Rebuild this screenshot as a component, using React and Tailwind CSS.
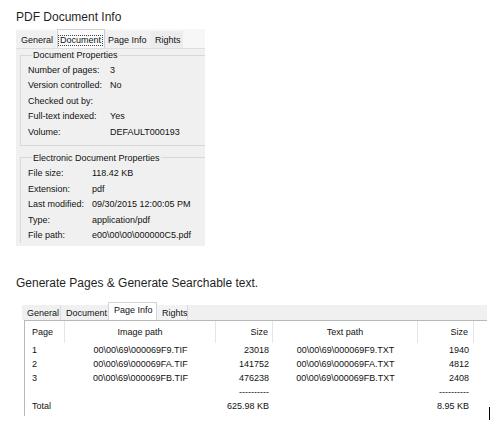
import React from "react";

const docProps = [
  ["Number of pages:", "3"],
  ["Version controlled:", "No"],
  ["Checked out by:", ""],
  ["Full-text indexed:", "Yes"],
  ["Volume:", "DEFAULT000193"],
];

const fileProps = [
  ["File size:", "118.42 KB"],
  ["Extension:", "pdf"],
  ["Last modified:", "09/30/2015 12:00:05 PM"],
  ["Type:", "application/pdf"],
  ["File path:", "e00\\00\\00\\000000C5.pdf"],
];

const pages = [
  ["1", "00\\00\\69\\000069F9.TIF", "23018", "00\\00\\69\\000069F9.TXT", "1940"],
  ["2", "00\\00\\69\\000069FA.TIF", "141752", "00\\00\\69\\000069FA.TXT", "4812"],
  ["3", "00\\00\\69\\000069FB.TIF", "476238", "00\\00\\69\\000069FB.TXT", "2408"],
];

const PropRows = ({ rows, labelW }) => (
  <div>
    {rows.map(([k, v]) => (
      <div key={k} className="flex h-[15.5px] items-center">
        <span className={labelW}>{k}</span>
        <span>{v}</span>
      </div>
    ))}
  </div>
);

export default function App() {
  return (
    <div className="relative h-[422px] w-[498px] overflow-hidden bg-white font-['Liberation_Sans',Arial,sans-serif] text-[#1f1f1f]">
      <div className="pl-4 pt-[10px]">
        <h1 className="text-[12px] leading-[14px]">PDF Document Info</h1>

        {/* top dialog */}
        <div className="mt-[5px] w-[189px] text-[9px] leading-[12px] text-[#111]">
          <div className="flex h-[19px] items-end bg-[#f7f7f7]">
            <div className="h-[17px] w-[40px] bg-[#f0f0f0] pl-[5px] pt-[3px]">General</div>
            <div className="ml-px h-[19px] w-[48px] border border-b-0 border-[#cfcfcf] bg-[#fbfbfb] pt-[4px]">
              <span className="inline-block border border-dotted border-[#444] px-px leading-[9px]">Document</span>
            </div>
            <div className="h-[17px] w-[46px] bg-[#f0f0f0] pl-[3px] pt-[3px]">Page Info</div>
            <div className="h-[17px] w-[32px] bg-[#ececec] pl-[4px] pt-[3px]">Rights</div>
          </div>
          <div className="h-[198px] overflow-hidden border-t border-[#dedede] bg-[#f0f0f0]">
            <fieldset className="ml-[4px] w-[185px] border border-r-0 border-[#d8d8d8] pb-[5px] pl-[7px] pt-px">
              <legend className="ml-[4px] px-px leading-[12px]">Document Properties</legend>
              <PropRows rows={docProps} labelW="w-[82px]" />
            </fieldset>
            <fieldset className="ml-[4px] mt-[6px] w-[185px] border border-b-0 border-r-0 border-[#d8d8d8] pl-[7px] pt-[2px]">
              <legend className="ml-[4px] px-px leading-[12px]">Electronic Document Properties</legend>
              <PropRows rows={fileProps} labelW="w-[64px]" />
            </fieldset>
          </div>
        </div>

        <h2 className="mt-[30px] text-[12px] leading-[14px]">Generate Pages &amp; Generate Searchable text.</h2>

        {/* bottom dialog */}
        <div className="ml-[6px] mt-[15px] w-[465px] text-[9px] leading-[12px] text-[#111]">
          <div className="flex h-[15px] items-end bg-[#f0f0f0]">
            <div className="h-[15px] w-[39px] border-r border-[#dadada] pl-[5px] pt-[2px]">General</div>
            <div className="h-[15px] w-[47px] pl-[5px] pt-[2px]">Document</div>
            <div className="h-[18px] w-[49px] border border-b-0 border-[#d4d4d4] bg-white pl-[5px] pt-px">Page Info</div>
            <div className="h-[15px] w-[31px] border-r border-[#dadada] bg-[#f3f3f3] pl-[5px] pt-[2px]">Rights</div>
          </div>
          <div className="ml-[2px] h-[96px] w-[463px] border-l border-t border-[#b8b8b8] bg-white">
            <div className="flex h-[22px] items-center">
              <div className="flex h-full w-[40px] items-center border-r border-[#e5e5e5] pl-[7px]">Page</div>
              <div className="flex h-full w-[151px] items-center justify-center border-r border-[#e5e5e5]">Image path</div>
              <div className="flex h-full w-[57px] items-center justify-end border-r border-[#e5e5e5] pr-[4px]">Size</div>
              <div className="flex h-full w-[145px] items-center justify-center border-r border-[#e5e5e5]">Text path</div>
              <div className="flex h-full w-[56px] items-center justify-end border-r border-[#e5e5e5] pr-[5px]">Size</div>
              <div className="flex-1" />
            </div>
            {pages.map((r) => (
              <div key={r[0]} className="flex h-[14px] items-center">
                <div className="w-[40px] pl-[7px]">{r[0]}</div>
                <div className="w-[151px] text-center">{r[1]}</div>
                <div className="w-[57px] pr-[4px] text-right">{r[2]}</div>
                <div className="w-[145px] text-center">{r[3]}</div>
                <div className="w-[56px] pr-[5px] text-right">{r[4]}</div>
              </div>
            ))}
            <div className="flex h-[14px] items-center">
              <div className="w-[191px]" />
              <div className="w-[57px] pr-[4px] text-right">----------</div>
              <div className="w-[145px]" />
              <div className="w-[56px] pr-[5px] text-right">----------</div>
            </div>
            <div className="flex h-[14px] items-center">
              <div className="w-[191px] pl-[7px]">Total</div>
              <div className="w-[57px] pr-[4px] text-right">625.98 KB</div>
              <div className="w-[145px]" />
              <div className="w-[56px] pr-[5px] text-right">8.95 KB</div>
            </div>
          </div>
        </div>
      </div>

      {/* text cursor */}
      <div className="absolute left-[489px] top-[407px] h-[13px] w-px bg-black" />
    </div>
  );
}
